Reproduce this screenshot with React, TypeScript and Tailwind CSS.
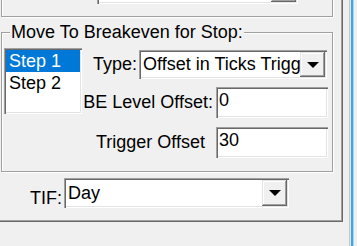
import { ReactNode } from 'react';

const sunken =
  'shadow-[inset_1px_1px_0_#a0a0a0,inset_2px_2px_0_#696969,inset_-1px_-1px_0_#ffffff,inset_-2px_-2px_0_#e3e3e3]';
const raised =
  'shadow-[inset_-1px_-1px_0_#696969,inset_1px_1px_0_#e3e3e3,inset_-2px_-2px_0_#a0a0a0,inset_2px_2px_0_#ffffff]';
const etched =
  'border border-[#a0a0a0] shadow-[inset_1px_1px_0_#ffffff,1px_1px_0_#ffffff]';

function DropButton() {
  return (
    <div className={`w-[25px] h-full shrink-0 bg-[#f0f0f0] flex items-center justify-center ${raised}`}>
      <svg width="12" height="6" viewBox="0 0 12 6">
        <polygon points="0,0 12,0 6,6" fill="#000" />
      </svg>
    </div>
  );
}

function Combo({ width, height, children }: { width: string; height: string; children?: ReactNode }) {
  return (
    <div className={`${width} ${height} bg-white p-[2px] flex ${sunken}`}>
      <div className="flex-1 min-w-0 flex items-center pl-[2px] overflow-hidden whitespace-nowrap">{children}</div>
      <DropButton />
    </div>
  );
}

function Edit({ value }: { value: string }) {
  return (
    <div className={`w-[112px] h-[31px] bg-white p-[2px] pt-[3px] pl-[3px] ${sunken}`}>{value}</div>
  );
}

export default function App() {
  return (
    <div className="w-[357px] h-[246px] overflow-hidden bg-[#f0f0f0] flex font-['Liberation_Sans',Arial,sans-serif] text-[18px] leading-[21px] text-black">
      <div className="w-[343px] h-[222px] shrink-0 flex flex-col shadow-[inset_-1px_-1px_0_#696969,inset_-2px_-2px_0_#a0a0a0]">
        {/* upper group, mostly scrolled away */}
        <div className={`ml-[1px] -mt-[40px] w-[332px] h-[57px] shrink-0 ${etched}`}>
          <div className="ml-[95px] mt-[14px]">
            <Combo width="w-[201px]" height="h-[29px]" />
          </div>
        </div>

        {/* Move To Breakeven group */}
        <div className={`relative ml-[1px] mt-[15px] w-[332px] h-[140px] shrink-0 ${etched}`}>
          <div className="absolute left-[8px] -top-[11px] px-[1px] bg-[#f0f0f0] whitespace-nowrap">
            Move To Breakeven for Stop:
          </div>

          <div className="flex items-start pt-[15px] pl-[2px]">
            <div className={`w-[78px] h-[66px] bg-white p-[2px] ${sunken}`}>
              <div className="h-[22px] pl-[3px] pt-[1px] bg-[#0078d7] text-white">Step 1</div>
              <div className="h-[22px] pl-[3px] pt-[1px]">Step 2</div>
            </div>

            <div className="w-[247px] mt-[2px] flex flex-col">
              <div className="flex items-center justify-end mr-[2px]">
                <span className="mr-[2px]">Type:</span>
                <Combo width="w-[188px]" height="h-[29px]">Offset in Ticks Trigger</Combo>
              </div>
              <div className="flex items-center justify-end mr-[1px] mt-[8px]">
                <span className="mr-[3px]">BE Level Offset:</span>
                <Edit value="0" />
              </div>
              <div className="flex items-center justify-end mr-[1px] mt-[9px]">
                <span className="mr-[11px]">Trigger Offset</span>
                <Edit value="30" />
              </div>
            </div>
          </div>
        </div>

        <div className="flex items-end ml-[30px] mt-[6px]">
          <span className="mr-[2px] leading-[20px]">TIF:</span>
          <Combo width="w-[225px]" height="h-[30px]">Day</Combo>
        </div>
      </div>

      {/* window edge */}
      <div className="flex-1 flex">
        <div className="w-[6px]" />
        <div className="w-[1px] bg-[#c4c4c4]" />
        <div className="w-[1px] bg-[#e8e8e8]" />
        <div className="w-[2px] bg-[#3aa6e8]" />
        <div className="w-[1px] bg-[#a9d8f5]" />
      </div>
    </div>
  );
}
